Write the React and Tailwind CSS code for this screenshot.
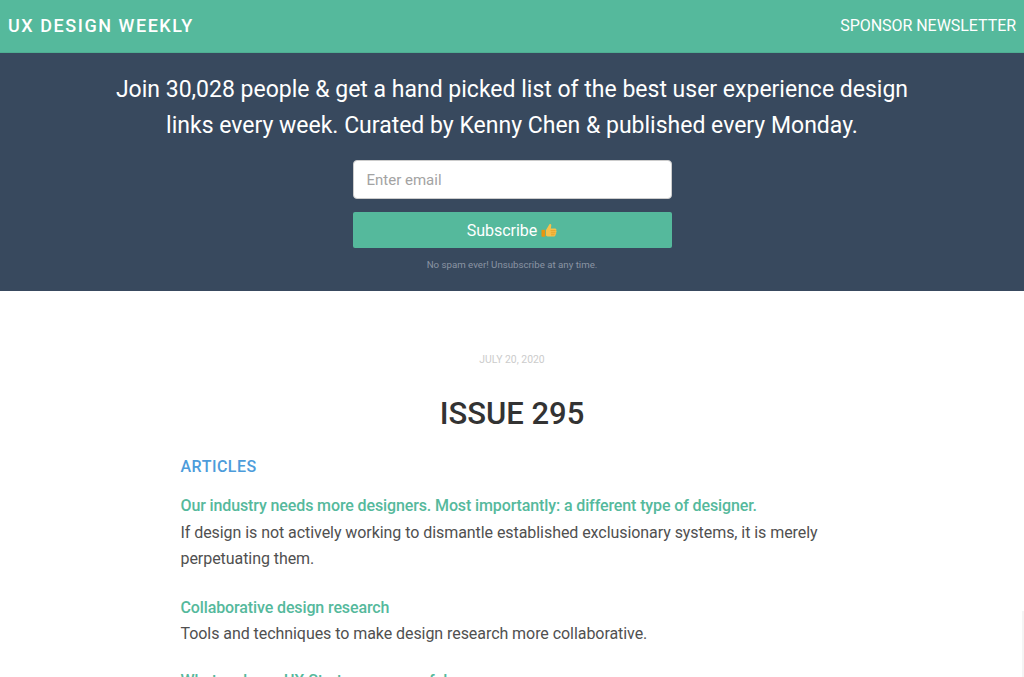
export default function App() {
  return (
    <div className="relative h-[677px] overflow-hidden bg-white font-['Roboto',sans-serif] text-[#505050]">
      <header className="h-[53px] bg-[#55b99c] border-b border-[#4fae92] flex items-center justify-between pl-2 pr-2 text-white">
        <div className="text-[18px] font-medium tracking-[1.55px] leading-none">UX DESIGN WEEKLY</div>
        <div className="text-[16px] leading-none tracking-[-0.05px]">SPONSOR NEWSLETTER</div>
      </header>
      <section className="h-[238px] bg-[#38495e] flex flex-col items-center pt-[19px]">
        <p className="w-[820px] text-center text-white text-[23px] leading-[36px]">
          Join 30,028 people &amp; get a hand picked list of the best user experience design links every week. Curated by Kenny Chen &amp; published every Monday.
        </p>
        <div className="mt-[16px] w-[319px] h-[39px] bg-white rounded-[4px] border border-[#ccc] flex items-center pl-[13px] pt-[1px] text-[15px] text-[#a3a3a3]">
          Enter email
        </div>
        <button className="mt-[13px] w-[319px] h-[36px] bg-[#55b99c] rounded-[2px] flex items-center justify-center gap-[4px] pt-[1px] text-white text-[16px] tracking-[-0.05px]">
          Subscribe
          <svg viewBox="0 0 16 16" className="w-[16px] h-[16px]">
            <path d="M5 7 8.300 1.600c.5-.9 2-.5 2 .8L9.800 5.600h4.300c1.300 0 1.700 1.300 1 2 .7.700.6 1.700-.1 2.200.4.800.1 1.600-.6 1.900.2.900-.4 1.700-1.300 1.700H7.800c-1.300 0-2.800-.5-2.800-1z" fill="#f7c04a" />
            <rect x="0.500" y="6.800" width="3.800" height="7" rx=".7" fill="#e8960f" />
            <path d="M9.600 7.700h5M9.800 9.800h4.700M10 11.800h3.600" stroke="#e0951a" strokeWidth=".7" fill="none" />
          </svg>
        </button>
        <div className="mt-[10px] text-[9.700px] leading-[14px] text-[#8a94a3]">No spam ever! Unsubscribe at any time.</div>
      </section>
      <main className="w-[663px] mx-auto">
        <div className="pt-[62px] text-center text-[10.400px] leading-[14px] text-[#ccc]">JULY 20, 2020</div>
        <h1 className="mt-[27px] text-center text-[31px] leading-[40px] font-medium text-[#333]">ISSUE 295</h1>
        <h2 className="mt-[21px] text-[#4d9cdb] text-[16px] leading-[24px] font-medium tracking-[0.5px]">ARTICLES</h2>
        <div className="mt-[13px]">
          <a className="block text-[#55b99c] text-[16px] leading-[27px] font-medium tracking-[-0.12px]">Our industry needs more designers. Most importantly: a different type of designer.</a>
          <p className="mt-[1px] text-[16px] leading-[26px] tracking-[-0.06px]">If design is not actively working to dismantle established exclusionary systems, it is merely perpetuating them.</p>
        </div>
        <div className="mt-[23px]">
          <a className="block text-[#55b99c] text-[16px] leading-[26px] font-medium tracking-[-0.12px]">Collaborative design research</a>
          <p className="text-[16px] leading-[26px] tracking-[-0.06px]">Tools and techniques to make design research more collaborative.</p>
        </div>
        <div className="mt-[21px]">
          <a className="block text-[#55b99c] text-[16px] leading-[26px] font-medium tracking-[-0.12px]">What makes a UX Strategy successful</a>
        </div>
      </main>
      <div className="absolute right-0 bottom-0 w-[2px] h-[66px] bg-[#f4f4f4]" />
    </div>
  );
}
